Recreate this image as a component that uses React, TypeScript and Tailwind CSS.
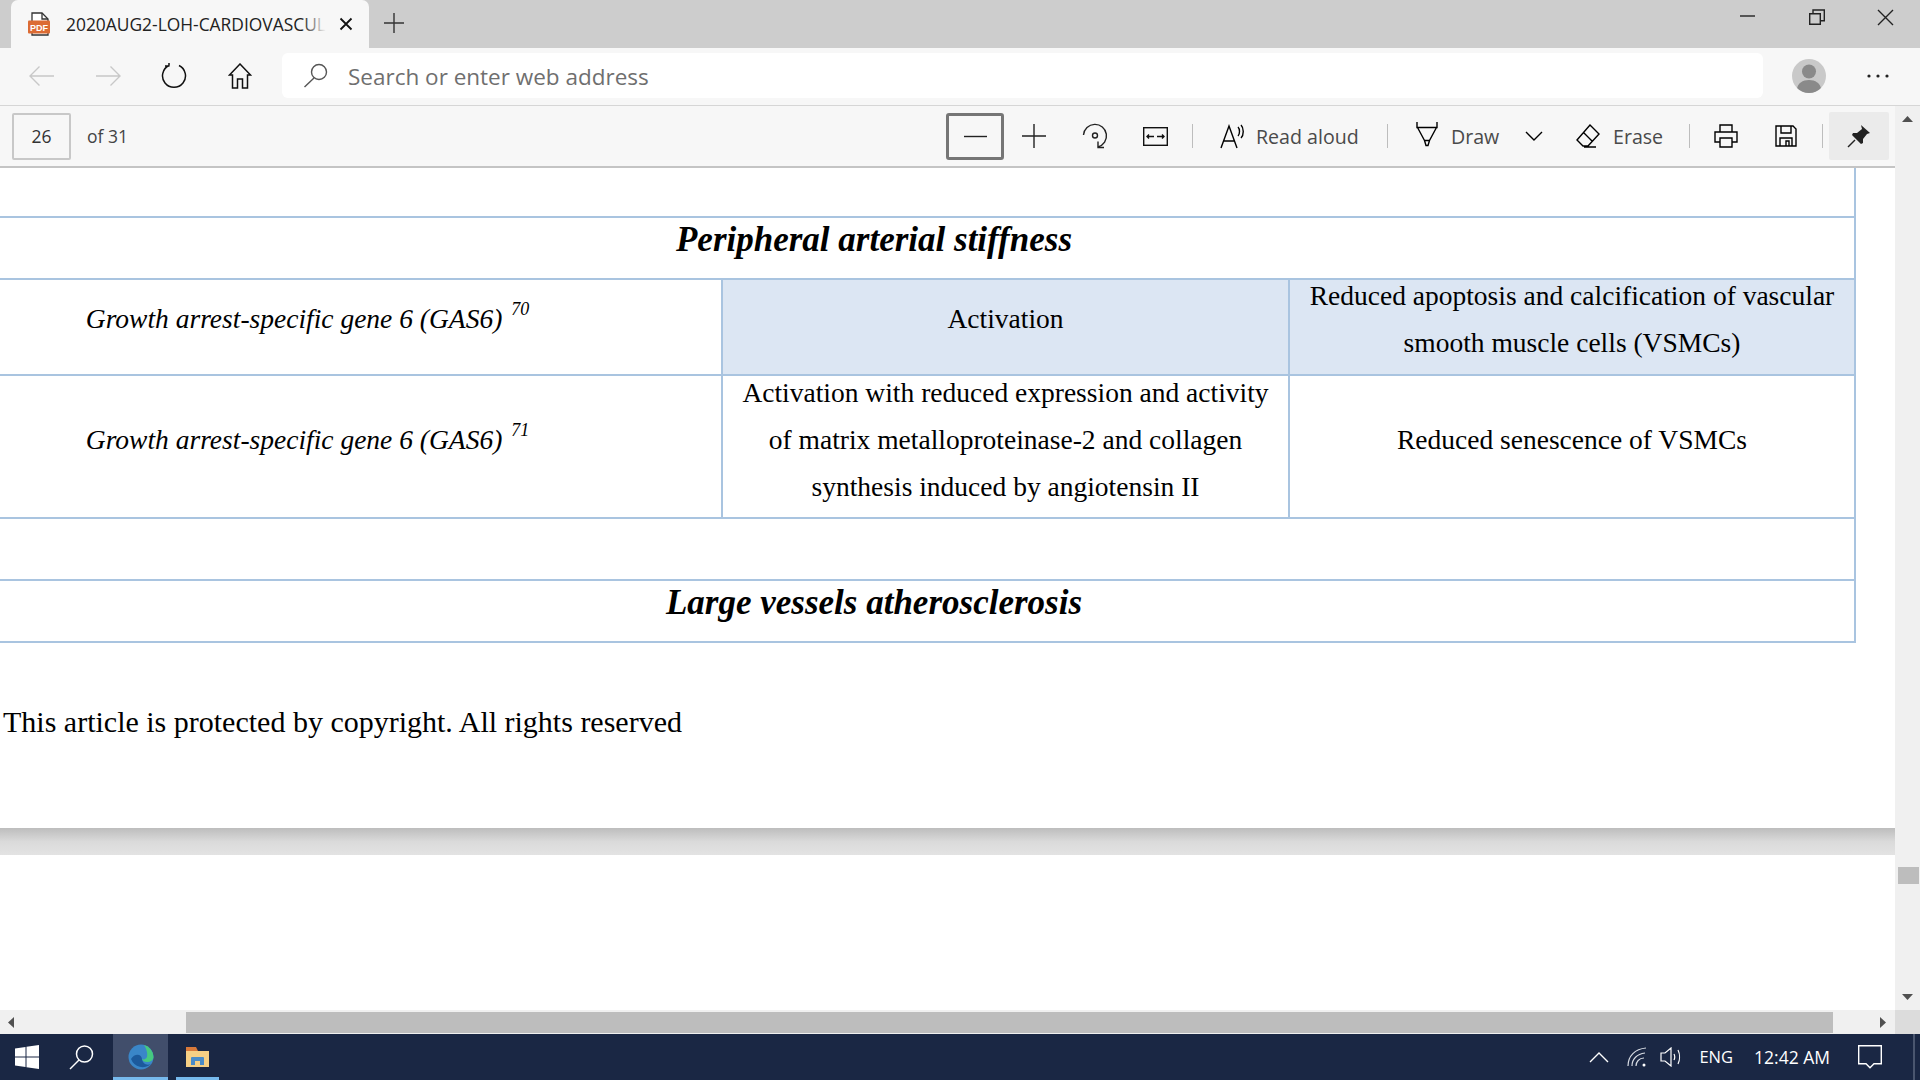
import React from "react";

const ui = "font-['Open_Sans','Noto_Sans',sans-serif]";
const Sv = ({ w, h, children, className = "" }: { w: number; h: number; children: React.ReactNode; className?: string }) => (
  <svg width={w} height={h} viewBox={`0 0 ${w} ${h}`} fill="none" stroke="currentColor" strokeWidth={1.4} className={`shrink-0 ${className}`}>
    {children}
  </svg>
);
const Slot = ({ w, children }: { w: number; children: React.ReactNode }) => (
  <div className="flex h-full shrink-0 items-center justify-center text-[#222]" style={{ width: w }}>
    {children}
  </div>
);
const Sep = ({ ml, mr }: { ml: string; mr: string }) => <div className={`h-[24px] w-px shrink-0 bg-[#bdbdbd] ${ml} ${mr}`} />;

function TabStrip() {
  return (
    <div className="flex h-[48px] shrink-0 bg-[#cdcdcd]">
      <div className="ml-[11px] flex h-[48px] w-[358px] items-center rounded-t-[7px] bg-[#f7f7f7]">
        <svg width="24" height="24" viewBox="0 0 24 24" className="ml-[16px] shrink-0">
          <path d="M5 1h10l6 6v16H5z" fill="#fff" stroke="#333" strokeWidth="1.3" />
          <path d="M15 1v6h6" fill="none" stroke="#333" strokeWidth="1.3" />
          <rect x="1" y="8.5" width="22" height="13" rx="1" fill="#dc6b33" />
          <text x="12" y="18.5" textAnchor="middle" fontSize="9" fontWeight="700" fill="#fff" fontFamily="'Liberation Sans',sans-serif">PDF</text>
        </svg>
        <div className={`relative ml-[15px] w-[260px] overflow-hidden whitespace-nowrap text-[17.4px] text-[#222] ${ui}`}>
          2020AUG2-LOH-CARDIOVASCULAR
          <div className="absolute inset-y-0 right-0 w-[24px] bg-gradient-to-r from-transparent to-[#f7f7f7]" />
        </div>
        <svg width="14" height="14" viewBox="0 0 14 14" className="ml-[13px] text-[#111]" stroke="currentColor" strokeWidth="1.8">
          <path d="M1.5 1.5l11 11M12.5 1.5l-11 11" />
        </svg>
      </div>
      <svg width="20" height="20" viewBox="0 0 20 20" className="ml-[15px] mt-[13px] text-[#333]" stroke="currentColor" strokeWidth="1.4">
        <path d="M10 0v20M0 10h20" />
      </svg>
      <div className="ml-auto flex text-[#222]">
        <Slot w={69}><Sv w={16} h={16} className="-mt-[16px]"><path d="M0 8h15" /></Sv></Slot>
        <Slot w={69}><Sv w={16} h={16} className="-mt-[14px]"><path d="M.7 4.7h10.6v10.6H.7zM4 4.5V1h11.3v10.8h-4" /></Sv></Slot>
        <Slot w={69}><Sv w={17} h={17} className="-mt-[14px]"><path d="M1 1l15 15M16 1L1 16" /></Sv></Slot>
      </div>
    </div>
  );
}

function NavBar() {
  return (
    <div className="flex h-[58px] shrink-0 items-center border-b border-[#d6d6d6] bg-[#f7f7f7] pb-[3px] pt-[1px]">
      <div className="ml-[9px] flex h-full">
        <Slot w={66}><Sv w={26} h={22} className="text-[#c8c8c8]"><path d="M25 11H1M10.5 1.5L1 11l9.5 9.5" /></Sv></Slot>
        <Slot w={66}><Sv w={26} h={22} className="text-[#c8c8c8]"><path d="M1 11h24M15.5 1.5L25 11l-9.500 9.500" /></Sv></Slot>
        <Slot w={66}><Sv w={26} h={27} className="text-[#111]"><path d="M8 3.500A11.500 11.500 0 1 0 18 3.500M8 3.500V1M8.500 4L4 4" strokeWidth="1.500" /></Sv></Slot>
        <Slot w={66}><Sv w={24} h={26} className="text-[#111]"><path d="M12 1L1.500 12H4.500V25H9.500V16H14.500V25H19.500V12H22.500z" strokeWidth="1.500" /></Sv></Slot>
      </div>
      <div className="ml-[9px] flex h-[45px] w-[1481px] shrink-0 items-center rounded-[6px] bg-white">
        <Sv w={25} h={25} className="ml-[21px] text-[#555]"><circle cx="16" cy="9" r="7.500" /><path d="M11 15L1.500 24" /></Sv>
        <span className={`ml-[20px] mt-[4px] text-[22.5px] leading-none text-[#6f6f6f] ${ui}`}>Search or enter web address</span>
      </div>
      <div className="ml-[29px] flex h-[34px] w-[34px] shrink-0 items-center justify-center overflow-hidden rounded-full bg-[#c9c9c9]">
        <svg width="34" height="34" viewBox="0 0 34 34">
          <circle cx="17" cy="12.500" r="7" fill="#8a8a8a" />
          <path d="M5 31c0-7 6-10 12-10s12 3 12 10v3H5z" fill="#8a8a8a" />
        </svg>
      </div>
      <svg width="22" height="4" viewBox="0 0 22 4" className="ml-[41px] shrink-0 text-[#222]" fill="currentColor">
        <circle cx="2" cy="2" r="1.600" /><circle cx="11" cy="2" r="1.600" /><circle cx="20" cy="2" r="1.600" />
      </svg>
    </div>
  );
}

function PdfBar() {
  const label = `mt-[2px] shrink-0 whitespace-nowrap text-[19.6px] leading-none text-[#4a4a4a] ${ui}`;
  return (
    <div className="flex h-[62px] shrink-0 items-center border-b-2 border-[#c4c4c4] bg-[#f7f7f7] pr-[6px]">
      <div className={`ml-[12px] flex h-[47px] w-[59px] shrink-0 items-center justify-center rounded-[2px] border-2 border-[#c8c8c8] text-[17.5px] text-[#333] ${ui}`}>26</div>
      <span className={`ml-[16px] shrink-0 whitespace-nowrap text-[17.5px] text-[#444] ${ui}`}>of 31</span>
      <div className="ml-auto flex h-[47px] w-[58px] shrink-0 items-center justify-center rounded-[3px] border-[3px] border-[#767676]">
        <Sv w={23} h={3} className="text-[#222]"><path d="M0 1.500h23" /></Sv>
      </div>
      <div className="flex h-full shrink-0 items-center">
        <Slot w={60}><Sv w={24} h={24}><path d="M12 0v24M0 12h24" /></Sv></Slot>
        <Slot w={62}>
          <Sv w={26} h={26}><path d="M1.500 12A11.500 11.500 0 1 1 16 24" /><circle cx="13" cy="12.500" r="2.500" /><path d="M16 18.500V24.500H22" /></Sv>
        </Slot>
        <Slot w={58}>
          <Sv w={25} h={19} className="text-[#111]"><rect x=".7" y=".7" width="23.600" height="17.600" /><path d="M4 9.500h7M21 9.500h-7M6 7.500l-2 2 2 2M19 7.500l2 2-2 2" /></Sv>
        </Slot>
        <Sep ml="ml-[8px]" mr="mr-[27px]" />
        <Sv w={24} h={25}><path d="M1 24L9 2l8 22M4 17h10M18 3c2 2 2 7 0 9M21 1c3 3 3 10 0 13" /></Sv>
        <span className={`ml-[12px] w-[102px] ${label}`}>Read aloud</span>
        <Sep ml="ml-[29px]" mr="mr-[28px]" />
        <Sv w={22} h={25} className="-mt-[4px]"><path d="M1 0v5.500h20V0M1.500 5.500l7 13 1.500 5h2l1.500-5 7-13M8.500 18.500h5" /></Sv>
        <span className={`ml-[13px] w-[47px] ${label}`}>Draw</span>
        <Sv w={18} h={10} className="ml-[27px]"><path d="M1 1l8 8 8-8" /></Sv>
        <Sv w={24} h={24} className="ml-[33px]"><path d="M14 1l9 9-11 12H7l-6-6zM7 8l9 9M8 23h12" /></Sv>
        <span className={`ml-[13px] w-[47px] ${label}`}>Erase</span>
        <Sep ml="ml-[29px]" mr="mr-[24px]" />
        <Sv w={24} h={24}><path d="M6 8V1h12v7M6 18H1V8h22v10h-5M6 14h12v9H6z" /></Sv>
        <Sv w={22} h={22} className="ml-[37px]"><path d="M1 1h17l3 3v17H1zM6 1v7h10V1M5 21v-8h12v8M11 16h3v5h-3z" /></Sv>
        <Sep ml="ml-[25px]" mr="mr-[6px]" />
        <div className="flex h-[48px] w-[60px] shrink-0 items-center justify-center rounded-[2px] bg-[#ebebeb]">
          <svg width="24" height="24" viewBox="0 0 24 24">
            <path d="M14 1l9 8-3 1-4 5 0 4-2 1-9-9 1-2 4 0 5-4z" fill="#222" />
            <path d="M8 16L1 23" stroke="#222" strokeWidth="1.500" fill="none" />
          </svg>
        </div>
      </div>
    </div>
  );
}

const line = "border-[#a9c4e0]";
const serif = "font-['Liberation_Serif','Times_New_Roman',serif] text-black";

function Row({ children, h }: { children: React.ReactNode; h: string }) {
  return <div className={`flex ${h} border-b-2 ${line}`}>{children}</div>;
}

function Table() {
  const cell = "flex items-center justify-center text-center text-[27.5px] leading-[47px]";
  const gene = (n: string, pb: string) => (
    <div className={`${cell} ${pb} w-[829px] shrink-0 border-r-2 ${line} italic`}>
      <span>
        Growth arrest-specific gene 6 (GAS6) <sup className="relative -top-[13px] ml-[2px] align-baseline text-[18px] leading-none">{n}</sup>
      </span>
    </div>
  );
  const title = "flex items-center justify-center text-[35px] font-bold italic pb-[15px]";
  return (
    <div className={`-ml-[106px] w-[1962px] ${serif} border-r-2 ${line}`}>
      <div className={`h-[50px] border-b-2 ${line}`} />
      <Row h="h-[62px]"><div className={`${title} w-full`}>Peripheral arterial stiffness</div></Row>
      <Row h="h-[96px]">
        {gene("70", "pb-[18px]")}
        <div className={`${cell} pb-[18px] w-[567px] shrink-0 border-r-2 ${line} bg-[#dce6f3]`}>Activation</div>
        <div className={`${cell} pb-[16px] flex-1 bg-[#dce6f3] px-[8px]`}>Reduced apoptosis and calcification of vascular smooth muscle cells (VSMCs)</div>
      </Row>
      <Row h="h-[143px]">
        {gene("71", "pb-[14px]")}
        <div className={`${cell} pb-[14px] w-[567px] shrink-0 border-r-2 ${line} px-[10px]`}>Activation with reduced expression and activity of matrix metalloproteinase-2 and collagen synthesis induced by angiotensin II</div>
        <div className={`${cell} pb-[14px] flex-1`}>Reduced senescence of VSMCs</div>
      </Row>
      <div className={`h-[62px] border-b-2 ${line}`} />
      <Row h="h-[62px]"><div className={`${title} w-full`}>Large vessels atherosclerosis</div></Row>
    </div>
  );
}

function Doc() {
  return (
    <div className="flex min-h-0 flex-1 flex-col overflow-hidden bg-white">
      <div className="h-[660px] shrink-0 overflow-hidden">
        <Table />
        <p className={`ml-[3px] mt-[55px] text-[30px] leading-[47px] ${serif}`}>This article is protected by copyright. All rights reserved</p>
      </div>
      <div className="h-[27px] shrink-0 bg-gradient-to-b from-[#bdbdbd] via-[#dadada] to-[#e3e3e3]" />
      <div className="flex-1 bg-white" />
    </div>
  );
}

const Tri = ({ d, w, h }: { d: string; w: number; h: number }) => (
  <svg width={w} height={h} viewBox={`0 0 ${w} ${h}`} fill="#505050"><path d={d} /></svg>
);

function Taskbar() {
  return (
    <div className="flex h-[46px] shrink-0 items-center bg-[#1a2744] text-white">
      <svg width="24" height="24" viewBox="0 0 24 24" fill="#fff" className="ml-[15px]">
        <path d="M0 3.500l10.500-1.500v9.500H0zM11.500 1.800L24 0v11.500H11.500zM0 12.500h10.500V22L0 20.500zM11.500 12.500H24V24l-12.500-1.800z" />
      </svg>
      <svg width="25" height="25" viewBox="0 0 25 25" fill="none" stroke="#fff" strokeWidth="1.500" className="ml-[30px]">
        <circle cx="15.500" cy="9" r="8" /><path d="M10 15L1 24" />
      </svg>
      <div className="relative ml-[19px] flex h-full w-[55px] items-center justify-center bg-[#414e6b]">
        <svg width="26" height="26" viewBox="0 0 26 26">
          <circle cx="13" cy="13" r="12.500" fill="#3a86c8" />
          <path d="M16 1a12.500 12.500 0 0 1 9.500 12c0 3-3 5-6.500 5-3 0-5-1.500-5-3 2 1 4 0 5-2 1-4-1-9-3-12z" fill="#46c97f" />
          <path d="M3 15c3-5 10-6 11 0 .5 4 4 7 9 5a12.500 12.500 0 0 1-20-5z" fill="#1c5a9c" />
        </svg>
        <div className="absolute inset-x-0 bottom-0 h-[3px] bg-[#76b9ed]" />
      </div>
      <div className="relative ml-[8px] flex h-full w-[43px] items-center justify-center">
        <svg width="23" height="20" viewBox="0 0 23 20">
          <path d="M0 0h10l2 4H0z" fill="#d9793a" />
          <path d="M0 4h23v16H0z" fill="#f6cf85" />
          <path d="M5 18v-7a1 1 0 0 1 1-1h11a1 1 0 0 1 1 1v7h-4v-4H9v4z" fill="#4a8bc8" />
        </svg>
        <div className="absolute inset-x-0 bottom-0 h-[3px] bg-[#76b9ed]" />
      </div>
      <div className="ml-auto flex items-center">
        <svg width="20" height="11" viewBox="0 0 20 11" fill="none" stroke="#fff" strokeWidth="1.400"><path d="M1 10l9-9 9 9" /></svg>
        <svg width="20" height="20" viewBox="0 0 20 20" fill="none" stroke="#d8dce4" strokeWidth="1.200" className="ml-[18px]">
          <path d="M1 19C1 9 8 2 19 1M5 19c0-7 5-12 13-13M9 19c0-4 3-8 8-8" />
          <circle cx="17" cy="18" r="1.500" fill="#fff" stroke="none" />
        </svg>
        <svg width="23" height="20" viewBox="0 0 23 20" fill="none" stroke="#fff" strokeWidth="1.200" className="ml-[13px]">
          <path d="M1 6h4l6-5v18l-6-5H1zM14 7c1 2 1 4 0 6M18 3c2 4 2 10 0 14" />
        </svg>
        <span className={`ml-[16px] mt-[1px] text-[16.5px] leading-none ${ui}`}>ENG</span>
        <span className={`ml-[21px] mt-[1px] text-[17.5px] leading-none ${ui}`}>12:42 AM</span>
        <svg width="24" height="24" viewBox="0 0 24 24" fill="none" stroke="#fff" strokeWidth="1.400" className="ml-[28px]">
          <path d="M.7.700h22.600v18H16l-4 4-4-4H.7z" />
        </svg>
        <div className="ml-[31px] mr-[5px] h-[46px] w-[2px] bg-[#4a566f]" />
      </div>
    </div>
  );
}

export default function App() {
  return (
    <div className="flex h-[1080px] w-[1920px] flex-col overflow-hidden bg-white">
      <TabStrip />
      <NavBar />
      <div className="flex min-h-0 flex-1">
        <div className="flex min-w-0 flex-1 flex-col">
          <PdfBar />
          <Doc />
          <div className="flex h-[24px] shrink-0 items-center bg-[#f0f0f0]">
            <div className="ml-[8px] w-[178px]"><Tri d="M6 0v11L0 5.500z" w={6} h={11} /></div>
            <div className="mt-[1px] h-[21px] w-[1647px] bg-[#bdbdbd]" />
            <div className="ml-[47px]"><Tri d="M0 0v11l6-5.500z" w={6} h={11} /></div>
          </div>
        </div>
        <div className="flex w-[25px] shrink-0 flex-col bg-[#f0f0f0]">
          <div className="flex h-[26px] items-center justify-center"><Tri d="M0 6h11L5.500 0z" w={11} h={6} /></div>
          <div className="ml-[3px] mt-[735px] h-[17px] w-[21px] bg-[#bdbdbd]" />
          <div className="mt-[100px] flex h-[26px] items-end justify-center pb-[10px]"><Tri d="M0 0h11L5.500 6z" w={11} h={6} /></div>
          <div className="flex-1 bg-[#dcdcdc]" />
        </div>
      </div>
      <Taskbar />
    </div>
  );
}
